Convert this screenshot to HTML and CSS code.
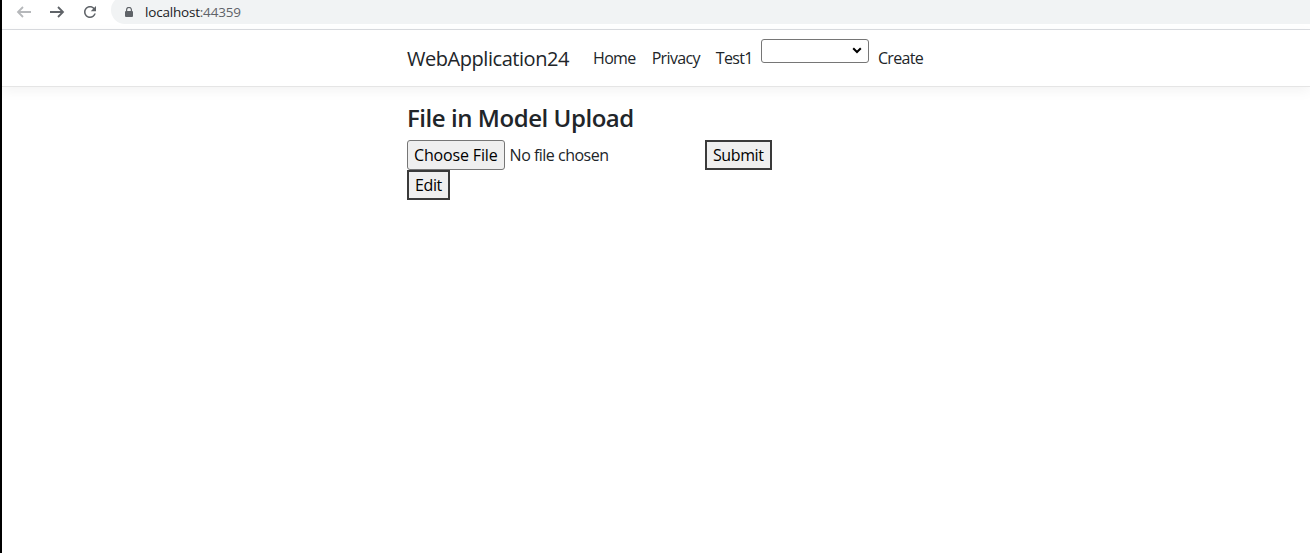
FILE: index.html
```html
<!DOCTYPE html>
<html lang="en">
<head>
<meta charset="utf-8">
<title>WebApplication24</title>
<link rel="stylesheet" href="styles.css">
</head>
<body>
<div class="window">
  <header class="toolbar">
    <div class="tool-buttons">
      <span class="tool-btn is-disabled">
        <svg width="18" height="18" viewBox="0 0 18 18"><path d="M16 9H3M8 4L3 9l5 5" fill="none" stroke="currentColor" stroke-width="1.8"/></svg>
      </span>
      <span class="tool-btn">
        <svg width="18" height="18" viewBox="0 0 18 18"><path d="M2 9h13M10 4l5 5-5 5" fill="none" stroke="currentColor" stroke-width="1.8"/></svg>
      </span>
      <span class="tool-btn">
        <svg width="18" height="18" viewBox="0 0 24 24"><path d="M17.65 6.35C16.2 4.9 14.21 4 12 4c-4.42 0-7.990 3.58-7.99 8s3.57 8 7.99 8c3.73 0 6.84-2.55 7.73-6h-2.08c-.82 2.33-3.04 4-5.65 4-3.31 0-6-2.69-6-6s2.69-6 6-6c1.66 0 3.14.69 4.22 1.78L13 11h7V4l-2.35 2.350z" fill="currentColor"/></svg>
      </span>
    </div>
    <div class="omnibox">
      <svg class="lock" width="8" height="10" viewBox="0 0 8 10"><path d="M1.6 4V2.8a2.4 2.4 0 0 1 4.8 0V4" fill="none" stroke="currentColor" stroke-width="1.2"/><rect x="0" y="4" width="8" height="6" rx="1" fill="currentColor"/></svg>
      <span class="url"><span class="url-host">localhost</span><span class="url-port">:44359</span></span>
    </div>
  </header>

  <div class="page">
    <nav class="navbar">
      <div class="container navbar-inner">
        <a class="brand" href="#">WebApplication24</a>
        <a class="nav-link" href="#">Home</a>
        <a class="nav-link" href="#">Privacy</a>
        <a class="nav-link" href="#">Test1</a>
        <span class="select-wrap">
          <select class="picker"><option></option></select>
          <svg class="chevron" width="10" height="7" viewBox="0 0 10 7"><path d="M1.2 1.2L5 5l3.8-3.8" fill="none" stroke="#000" stroke-width="2"/></svg>
        </span>
        <a class="nav-link" href="#">Create</a>
      </div>
    </nav>

    <main class="container">
      <h2 class="title">File in Model Upload</h2>
      <form class="upload-form">
        <div class="upload-row">
          <input class="file-input" type="file">
          <button class="btn" type="submit">Submit</button>
        </div>
        <button class="btn" type="button">Edit</button>
      </form>
    </main>
  </div>
</div>
</body>
</html>
```

FILE: styles.css
```css
html, body {
  margin: 0;
  padding: 0;
  height: 100%;
}

body {
  font-family: "Open Sans", "Noto Sans", "Liberation Sans", sans-serif;
  color: #212529;
  background: #fff;
}

.window {
  height: 100%;
  border-left: 2px solid #000;
  display: flex;
  flex-direction: column;
  overflow: hidden;
}

/* browser toolbar */
.toolbar {
  height: 29px;
  flex: none;
  display: flex;
  align-items: flex-start;
  background: #fff;
  border-bottom: 1px solid #dadce0;
}

.tool-buttons {
  display: flex;
  gap: 15px;
  padding: 3px 0 0 13px;
}

.tool-btn {
  width: 18px;
  height: 18px;
  color: #5f6368;
  display: flex;
}

.tool-btn.is-disabled {
  color: #b6b8bb;
}

.omnibox {
  flex: 1;
  margin-left: 12px;
  margin-top: -4px;
  height: 28px;
  border-radius: 14px 0 0 14px;
  background: #f1f3f4;
  display: flex;
  align-items: center;
  padding: 4px 0 0 14px;
  box-sizing: border-box;
}

.lock {
  color: #5f6368;
  margin-right: 12px;
}

.url {
  font-size: 13.5px;
  line-height: 16px;
  letter-spacing: -0.2px;
}

.url-host {
  color: #202124;
}

.url-port {
  color: #5f6368;
}

/* site */
.page {
  flex: 1;
  background: #fff;
}

.container {
  width: 522px;
  margin: 0 auto;
  padding: 0 12px;
  box-sizing: border-box;
}

.navbar {
  padding: 8px 0;
  border-bottom: 1px solid #e5e5e5;
  box-shadow: 0 4px 12px rgba(0, 0, 0, .05);
  margin-bottom: 16px;
}

.navbar-inner {
  display: flex;
  align-items: center;
  flex-wrap: nowrap;
  white-space: nowrap;
}

.brand {
  font-size: 20px;
  line-height: 30px;
  padding: 6px 0 4px;
  margin-right: 16px;
  letter-spacing: -0.45px;
  color: #212529;
  text-decoration: none;
}

.nav-link {
  font-size: 16px;
  line-height: 24px;
  padding: 8px;
  letter-spacing: -0.65px;
  color: #212529;
  text-decoration: none;
}

.select-wrap {
  position: relative;
  align-self: flex-start;
  margin: 1px 1px 0 0;
  display: flex;
}

.picker {
  appearance: none;
  width: 108px;
  height: 24px;
  border: 1px solid #767676;
  border-radius: 3px;
  background: #fff;
  margin: 0;
}

.chevron {
  position: absolute;
  right: 7px;
  top: 8px;
}

.title {
  font-size: 24px;
  font-weight: 600;
  line-height: 1.2;
  padding-top: 1px;
  margin: 0 0 7px;
  letter-spacing: -0.45px;
}

.upload-row {
  display: flex;
}

.file-input {
  width: 298px;
  font-family: inherit;
  font-size: 16px;
  line-height: 24px;
  letter-spacing: -0.5px;
  color: #212529;
  margin: 0;
}

.file-input::file-selector-button {
  font: inherit;
  letter-spacing: -0.15px;
  color: #000;
  padding: 2px 6px;
  margin-right: 5px;
  border: 1px solid #767676;
  border-radius: 3px;
  background: #efefef;
}

.btn {
  font-family: inherit;
  font-size: 16px;
  line-height: 24px;
  letter-spacing: -0.4px;
  padding: 1px 6px;
  margin: 0;
  color: #000;
  background: #efefef;
  border: 2px solid #3a3a3a;
  border-radius: 0;
}
```
